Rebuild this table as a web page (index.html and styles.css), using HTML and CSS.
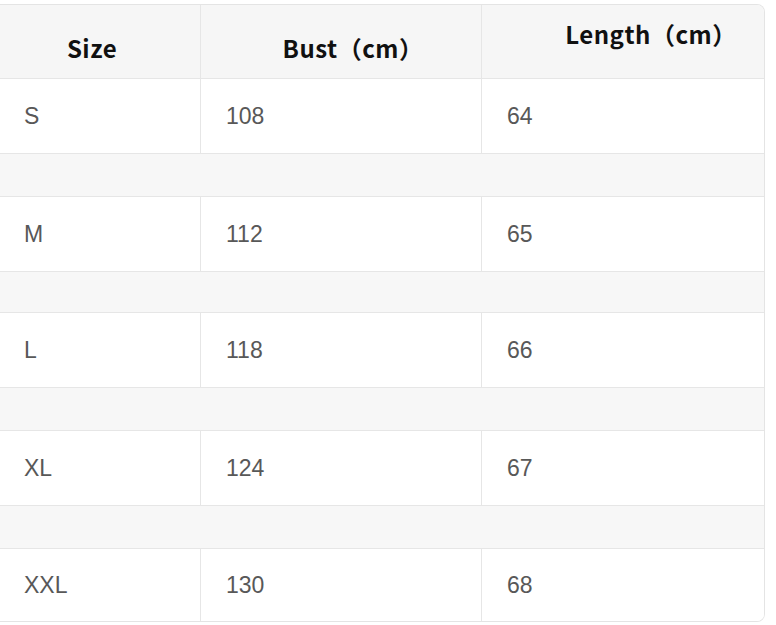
FILE: index.html
```html
<!DOCTYPE html>
<html>
<head>
<meta charset="utf-8">
<link rel="stylesheet" href="styles.css">
</head>
<body>
<div class="table">
  <div class="row head">
    <div class="cell hc"><span class="h h-low">Size</span></div>
    <div class="cell hc"><span class="h h-low">Bust（cm）</span></div>
    <div class="cell hc hc-len"><span class="h h-high">Length（cm）</span></div>
  </div>
  <div class="row data"><div class="cell">S</div><div class="cell">108</div><div class="cell">64</div></div>
  <div class="row spacer"></div>
  <div class="row data"><div class="cell">M</div><div class="cell">112</div><div class="cell">65</div></div>
  <div class="row spacer sp-short"></div>
  <div class="row data"><div class="cell">L</div><div class="cell">118</div><div class="cell">66</div></div>
  <div class="row spacer"></div>
  <div class="row data"><div class="cell">XL</div><div class="cell">124</div><div class="cell">67</div></div>
  <div class="row spacer"></div>
  <div class="row data last"><div class="cell">XXL</div><div class="cell">130</div><div class="cell">68</div></div>
</div>
</body>
</html>
```
FILE: styles.css
```css
html, body {
  margin: 0;
  padding: 0;
  background: #ffffff;
}
body {
  width: 776px;
  height: 625px;
  overflow: hidden;
  font-family: "Liberation Sans", Arial, sans-serif;
}
.table {
  margin-top: 4px;
  width: 765px;
  border: 1px solid #e4e4e4;
  border-left: none;
  border-radius: 0 8px 8px 0;
  overflow: hidden;
  box-sizing: border-box;
}
.row {
  display: grid;
  grid-template-columns: 200px 281px 1fr;
  border-bottom: 1px solid #e6e6e6;
  box-sizing: border-box;
}
.row.last {
  border-bottom: none;
}
.cell {
  box-sizing: border-box;
}
.cell + .cell {
  border-left: 1px solid #e6e6e6;
}
.head {
  height: 74px;
  background: #f6f6f6;
}
.hc {
  display: flex;
  justify-content: center;
  align-items: flex-start;
}
.h {
  font-family: "Noto Sans CJK SC", "Noto Sans", sans-serif;
  font-weight: 700;
  font-size: 24px;
  letter-spacing: 0.5px;
  line-height: 30px;
  color: #111111;
}
.h-low {
  padding-top: 28px;
  margin-left: -16px;
}
.hc:nth-child(2) .h-low {
  margin-left: 24px;
}
.h-high {
  padding-top: 14px;
  margin-left: 56px;
}
.data {
  height: 75px;
  background: #ffffff;
}
.data .cell {
  display: flex;
  align-items: center;
  padding-left: 25px;
  font-size: 23px;
  line-height: 30px;
  color: #585858;
}
.data .cell:first-child {
  padding-left: 24px;
}
.data.last {
  height: 72px;
}
.spacer {
  height: 43px;
  background: #f7f7f7;
}
.spacer.sp-short {
  height: 41px;
}
```
